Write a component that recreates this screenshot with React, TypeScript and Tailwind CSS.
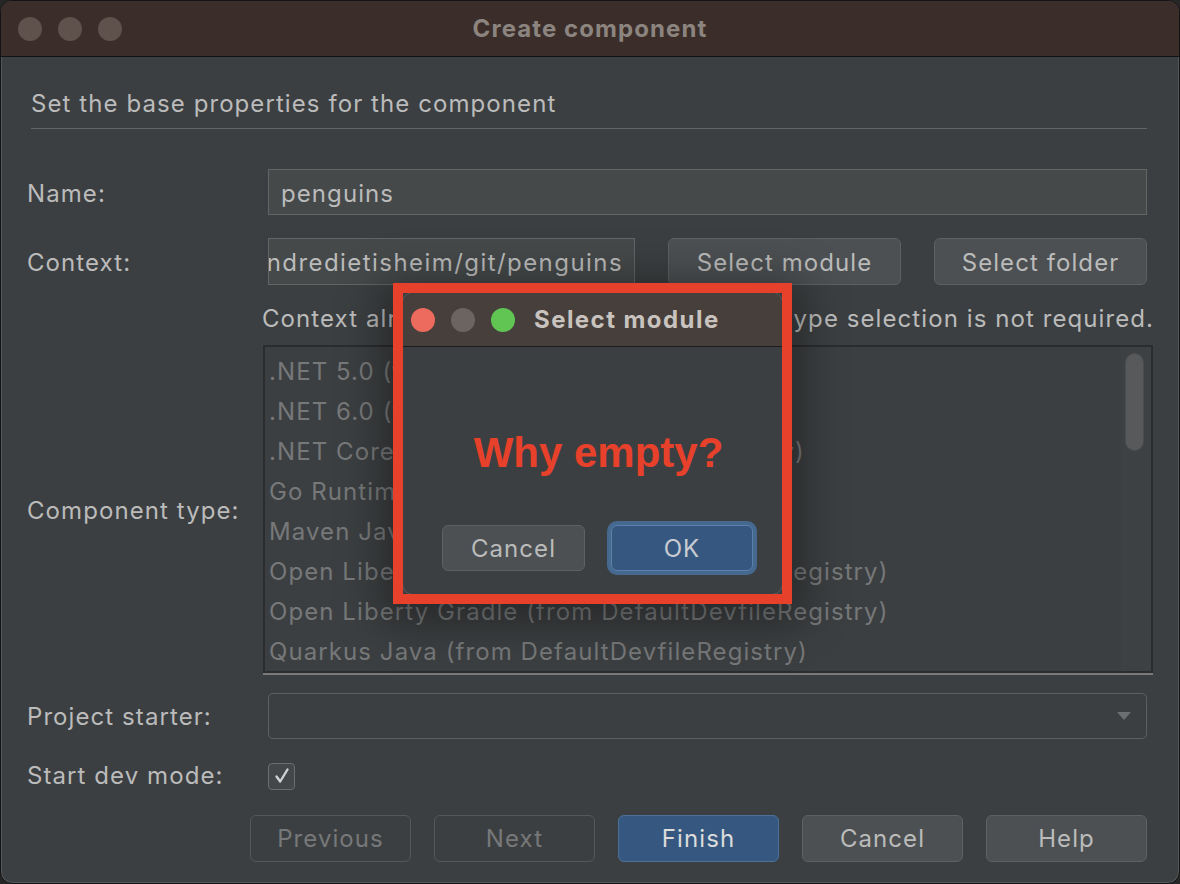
export default function App() {
  const items = [
    ".NET 5.0 (from DefaultDevfileRegistry)",
    ".NET 6.0 (from DefaultDevfileRegistry)",
    ".NET Core 3.1 (from DefaultDevfileRegistry)",
    "Go Runtime (from DefaultDevfileRegistry)",
    "Maven Java (from DefaultDevfileRegistry)",
    "Open Liberty Maven (from DefaultDevfileRegistry)",
    "Open Liberty Gradle (from DefaultDevfileRegistry)",
    "Quarkus Java (from DefaultDevfileRegistry)",
  ];

  return (
    <div className="relative w-[1180px] h-[884px] bg-[#262626] text-[#bbbbbb] text-[24px] leading-[30px] tracking-[0.045em] font-[family-name:Inter,'Noto_Sans',sans-serif]">
      {/* main window */}
      <div className="h-full flex flex-col rounded-[12px] overflow-hidden border border-[#141414] bg-[#3c3f41] shadow-[inset_0_0_0_1px_rgba(255,255,255,0.12)]">
        <div className="h-[56px] shrink-0 grid grid-cols-[1fr_auto_1fr] items-center bg-[#3b2e2a] border-b border-[#121212]">
          <div className="flex gap-[16px] pl-[17px]">
            <span className="w-[24px] h-[24px] rounded-full bg-[#5f524c]" />
            <span className="w-[24px] h-[24px] rounded-full bg-[#5f524c]" />
            <span className="w-[24px] h-[24px] rounded-full bg-[#5f524c]" />
          </div>
          <div className="font-bold text-[#8c847f]">Create component</div>
          <div />
        </div>

        <div className="flex-1 flex flex-col pl-[26px] pr-[32px]">
          <div className="mt-[32px] ml-[4px] pb-[9px] border-b border-[#626466]">
            Set the base properties for the component
          </div>

          <div className="mt-[40px] grid grid-cols-[241px_1fr] items-center">
            <div className="pt-[3px]">Name:</div>
            <div className="h-[46px] flex items-center pt-[3px] px-[12px] bg-[#45494a] border border-[#646464]">
              penguins
            </div>
          </div>

          <div className="mt-[23px] grid grid-cols-[241px_1fr] items-center">
            <div className="pt-[3px]">Context:</div>
            <div className="flex items-center">
              <div className="w-[367px] h-[47px] flex items-center justify-end overflow-hidden pt-[3px] pr-[11px] bg-[#45494a] border border-[#646464]">
                <span className="whitespace-nowrap tracking-[0.06em]">/Users/andredietisheim/git/penguins</span>
              </div>
              <button className="ml-[33px] w-[233px] h-[47px] pt-[2px] rounded-[6px] bg-[#4c5052] border border-[#5e6062] text-[#bbbbbb]">
                Select module
              </button>
              <button className="ml-auto w-[213px] h-[47px] pt-[2px] rounded-[6px] bg-[#4c5052] border border-[#5e6062] text-[#bbbbbb]">
                Select folder
              </button>
            </div>
          </div>

          <div className="mt-[19px] grid grid-cols-[241px_1fr]">
            <div />
            <div className="-ml-[6px] -mr-[7px] flex justify-between whitespace-nowrap">
              <span>Context already has a devfile,</span>
              <span>component type selection is not required.</span>
            </div>
          </div>

          <div className="mt-[11px] grid grid-cols-[241px_1fr] items-center">
            <div className="pt-[3px]">Component type:</div>
            <div className="relative -ml-[5px] -mr-[6px] h-[328px] border-2 border-[#2a2c2d] shadow-[0_2px_0_#7a7a7a] pt-[5px] pl-[4px] text-[#767879]">
              <div className="absolute top-0 right-0 bottom-0 w-[30px] bg-[#3e4143]">
                <div className="ml-[4px] mt-[6px] w-[19px] h-[98px] rounded-full bg-[#57595b] border border-[#4a4c4e]" />
              </div>
              {items.map((t) => (
                <div key={t} className="h-[40px] flex items-center whitespace-nowrap">
                  {t}
                </div>
              ))}
            </div>
          </div>

          <div className="mt-[20px] grid grid-cols-[241px_1fr] items-center">
            <div className="pt-[2px]">Project starter:</div>
            <div className="h-[46px] flex items-center justify-end pr-[14px] rounded-[5px] border border-[#5e6062]">
              <svg width="16" height="10" viewBox="0 0 16 10">
                <polygon points="1,1 15,1 8,9" fill="#6c6e70" />
              </svg>
            </div>
          </div>

          <div className="mt-[22px] h-[27px] grid grid-cols-[241px_1fr] items-center">
            <div>Start dev mode:</div>
            <div className="w-[27px] h-[27px] rounded-[4px] border border-[#6b6d6f] bg-[#43474a] flex items-center justify-center">
              <svg width="20" height="20" viewBox="0 0 20 20">
                <path d="M4.5 10.5 L8.2 15.5 L15.5 3.5" fill="none" stroke="#d0d0d0" strokeWidth="2.4" strokeLinecap="round" strokeLinejoin="round" />
              </svg>
            </div>
          </div>

          <div className="mt-[27px] flex justify-end gap-[23px]">
            <button className="w-[161px] h-[47px] rounded-[6px] border border-[#55585a] text-[#767879]">Previous</button>
            <button className="w-[161px] h-[47px] rounded-[6px] border border-[#55585a] text-[#767879]">Next</button>
            <button className="w-[161px] h-[47px] rounded-[6px] bg-[#365880] border border-[#4c7199] text-[#dcdcdc]">Finish</button>
            <button className="w-[161px] h-[47px] rounded-[6px] bg-[#4c5052] border border-[#5e6062] text-[#bbbbbb]">Cancel</button>
            <button className="w-[161px] h-[47px] rounded-[6px] bg-[#4c5052] border border-[#5e6062] text-[#bbbbbb]">Help</button>
          </div>
        </div>
      </div>

      {/* modal with red highlight */}
      <div className="absolute left-[393px] top-[283px] w-[399px] h-[321px] shadow-[0_8px_40px_12px_rgba(0,0,0,0.35)]">
        <div className="absolute inset-[9px] flex flex-col rounded-[11px] overflow-hidden bg-[#3c3f41] border border-[#5a5c5e]">
          <div className="h-[54px] shrink-0 flex items-center pl-[8px] bg-[#463f3b] border-b border-[#1c1c1c]">
            <span className="w-[24px] h-[24px] rounded-full bg-[#ed6a5e]" />
            <span className="ml-[16px] w-[24px] h-[24px] rounded-full bg-[#6b6461]" />
            <span className="ml-[16px] w-[24px] h-[24px] rounded-full bg-[#61c554]" />
            <span className="ml-[19px] font-bold tracking-[0.06em] text-[#c9c3bf]">Select module</span>
          </div>
          <div className="mt-[81px] pl-[12px] h-[50px] flex items-center justify-center text-[42px] font-bold tracking-normal text-[#e8412b] font-[family-name:'Liberation_Sans',Arial,sans-serif]">
            Why empty?
          </div>
          <div className="mt-[47px] pl-[39px] flex items-center gap-[26px]">
            <button className="w-[143px] h-[46px] pt-[2px] rounded-[6px] bg-[#4c5052] border border-[#5e6062] text-[#bbbbbb]">Cancel</button>
            <button className="w-[142px] h-[46px] pt-[2px] rounded-[6px] bg-[#365880] border border-[#5b80aa] text-[#c8ccd2] shadow-[0_0_0_4px_#46698f]">OK</button>
          </div>
        </div>
        <div className="absolute inset-0 border-[10px] border-[#e8412b]" />
      </div>
    </div>
  );
}
